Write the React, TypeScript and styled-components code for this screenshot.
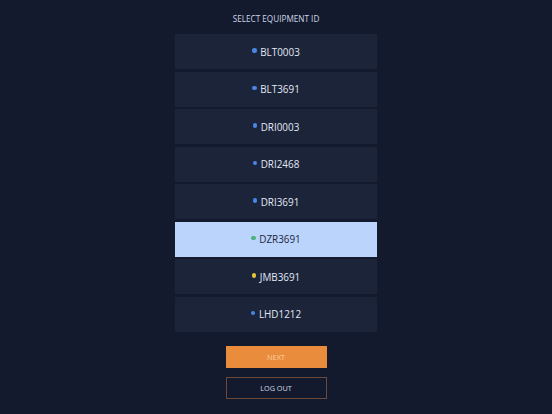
import styled, { createGlobalStyle } from 'styled-components';

const GlobalStyle = createGlobalStyle`
    html, body {
        margin: 0;
        padding: 0;
        background: #141a2d;
        font-family: 'Open Sans', 'Noto Sans', sans-serif;
    }
`;

type Status = 'idle' | 'active' | 'warning';

const statusColor: Record<Status, string> = {
    idle: '#4a86e8',
    active: '#4bb07f',
    warning: '#e8c33a',
};

const Page = styled.div`
    width: 552px;
    height: 414px;
    display: flex;
    flex-direction: column;
    align-items: center;
    box-sizing: border-box;
    padding-top: 13px;
    background: #141a2d;
`;

const Title = styled.h1`
    margin: 0 0 10px;
    font-size: 8.2px;
    font-weight: 500;
    color: #ccd4e6;
    line-height: 11px;
`;

const List = styled.div`
    width: 202px;
    display: flex;
    flex-direction: column;
    gap: 2.5px;
`;

const Row = styled.button<{ $selected?: boolean }>`
    height: 35px;
    border: 0;
    padding: 0;
    display: flex;
    align-items: center;
    justify-content: center;
    gap: 3.5px;
    cursor: pointer;
    font-family: inherit;
    font-size: 9.9px;
    font-weight: 500;
    color: ${props => (props.$selected ? '#1c2540' : '#e2e8f6')};
    background: ${props => (props.$selected ? '#bad4fb' : '#1c2439')};
`;

const Dot = styled.span<{ $status: Status }>`
    width: 4.5px;
    height: 4.5px;
    border-radius: 50%;
    margin-top: -2px;
    background: ${props => statusColor[props.$status]};
`;

const Actions = styled.div`
    display: flex;
    flex-direction: column;
    gap: 9px;
    margin-top: 14px;
`;

const ActionButton = styled.button<{ $primary?: boolean }>`
    width: 101px;
    height: 22px;
    box-sizing: border-box;
    font-family: inherit;
    font-size: 7.3px;
    font-weight: 500;
    cursor: pointer;
    color: ${props => (props.$primary ? '#f8cfa6' : '#d2d9e8')};
    background: ${props => (props.$primary ? '#e98c3b' : 'transparent')};
    border: 1px solid ${props => (props.$primary ? '#e98c3b' : '#6b4a3a')};
`;

const items: { id: string; status: Status }[] = [
    { id: 'BLT0003', status: 'idle' },
    { id: 'BLT3691', status: 'idle' },
    { id: 'DRI0003', status: 'idle' },
    { id: 'DRI2468', status: 'idle' },
    { id: 'DRI3691', status: 'idle' },
    { id: 'DZR3691', status: 'active' },
    { id: 'JMB3691', status: 'warning' },
    { id: 'LHD1212', status: 'idle' },
];

export default function App() {
    return (
        <>
            <GlobalStyle />
            <Page>
                <Title>SELECT EQUIPMENT ID</Title>
                <List>
                    {items.map(item => (
                        <Row key={item.id} $selected={item.id === 'DZR3691'}>
                            <Dot $status={item.status} />
                            {item.id}
                        </Row>
                    ))}
                </List>
                <Actions>
                    <ActionButton $primary>NEXT</ActionButton>
                    <ActionButton>LOG OUT</ActionButton>
                </Actions>
            </Page>
        </>
    );
}
